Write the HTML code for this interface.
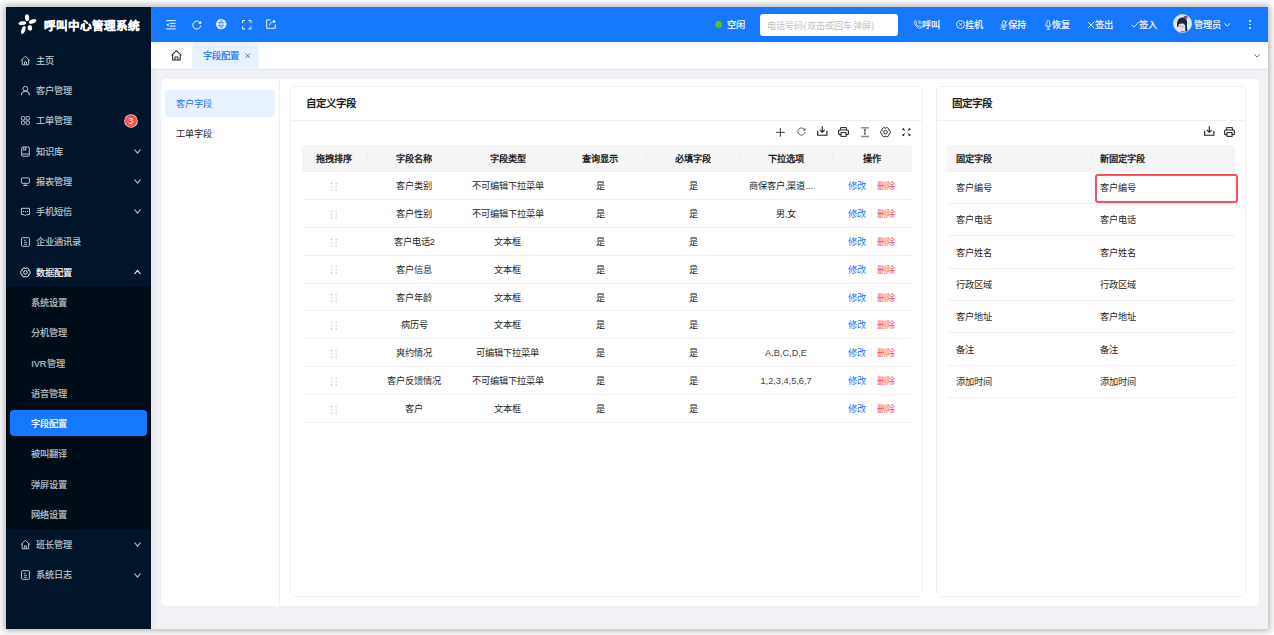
<!DOCTYPE html>
<html lang="zh-CN">
<head>
<meta charset="utf-8">
<style>
*{box-sizing:border-box;margin:0;padding:0}
html,body{width:1274px;height:635px;overflow:hidden;background:#fff}
body{font-family:"Liberation Sans",sans-serif;font-size:9.2px;color:#1f1f1f;position:relative}
#win{position:absolute;left:6px;top:7px;width:1262px;height:622px;background:#f0f2f5;box-shadow:0 0 7px 2px rgba(0,0,0,.3);overflow:hidden}
.a{position:absolute}
.t{white-space:nowrap;-webkit-text-stroke:0}
svg{display:block;overflow:visible}
</style>
</head>
<body>
<div id="win">
<div class="a" style="left:145.00px;top:35.00px;width:7.00px;height:587.00px;background:linear-gradient(90deg,rgba(29,35,41,.045),rgba(29,35,41,0))"></div>
<div class="a" style="left:0.00px;top:0.00px;width:145.00px;height:622.00px;background:#001529"></div>
<svg class="a" style="left:9.00px;top:5.00px;" width="24" height="24" viewBox="0 0 24 24"><ellipse cx="12.1" cy="5.7" rx="2.1" ry="3.4" transform="rotate(-5 12.1 5.7)" fill="#fff"/><ellipse cx="17.6" cy="9.4" rx="3.9" ry="2.0" transform="rotate(-22 17.6 9.4)" fill="#fff"/><ellipse cx="7.4" cy="11.2" rx="3.9" ry="1.9" transform="rotate(-8 7.4 11.2)" fill="#fff"/><ellipse cx="8.3" cy="18.0" rx="1.9" ry="4.2" transform="rotate(18 8.3 18)" fill="#fff"/><ellipse cx="14.9" cy="15.9" rx="2.2" ry="2.8" transform="rotate(-10 14.9 15.9)" fill="#fff"/></svg>
<div class="a t" style="left:38.00px;top:8.60px;height:20px;line-height:20px;font-size:11.6px;color:#fff;font-weight:700;-webkit-text-stroke:0;-webkit-text-stroke:.3px #fff;">呼叫中心管理系统</div>
<svg class="a" style="left:14.00px;top:47.80px;" width="11" height="11" viewBox="0 0 11 11"><path d="M0.9 5.7 L5.4 1.2 L9.9 5.7 M2.2 4.5 V9.8 H8.6 V4.5 M4.4 9.8 V6.9 H6.4 V9.8" fill="none" stroke="#bfc4cb" stroke-width="1" stroke-linejoin="round"/></svg>
<div class="a t" style="left:29.50px;top:43.90px;height:20px;line-height:20px;font-size:9.2px;color:#bfc4cb;font-weight:400;-webkit-text-stroke:.18px currentColor;">主页</div>
<svg class="a" style="left:14.00px;top:78.05px;" width="11" height="11" viewBox="0 0 11 11"><circle cx="5.4" cy="3.7" r="2.3" fill="none" stroke="#bfc4cb" stroke-width="1"/><path d="M1.4 10.2 C1.6 7.6 3.4 6.2 5.4 6.2 C7.4 6.2 9.2 7.6 9.4 10.2" fill="none" stroke="#bfc4cb" stroke-width="1.1"/></svg>
<div class="a t" style="left:29.50px;top:74.15px;height:20px;line-height:20px;font-size:9.2px;color:#bfc4cb;font-weight:400;-webkit-text-stroke:.18px currentColor;">客户管理</div>
<svg class="a" style="left:14.00px;top:108.30px;" width="11" height="11" viewBox="0 0 11 11"><rect x="1.4" y="1.6" width="3.4" height="3.4" rx=".9" fill="none" stroke="#bfc4cb" stroke-width="1"/><rect x="6" y="1.6" width="3.4" height="3.4" rx=".9" fill="none" stroke="#bfc4cb" stroke-width="1"/><rect x="1.4" y="6" width="3.4" height="3.4" rx=".9" fill="none" stroke="#bfc4cb" stroke-width="1"/><rect x="6" y="6" width="3.4" height="3.4" rx=".9" fill="none" stroke="#bfc4cb" stroke-width="1"/></svg>
<div class="a t" style="left:29.50px;top:104.40px;height:20px;line-height:20px;font-size:9.2px;color:#bfc4cb;font-weight:400;-webkit-text-stroke:.18px currentColor;">工单管理</div>
<svg class="a" style="left:14.00px;top:138.55px;" width="11" height="11" viewBox="0 0 11 11"><rect x="1.7" y="1" width="7.6" height="9.2" rx=".9" fill="none" stroke="#bfc4cb" stroke-width="1"/><path d="M3.7 1.2 V4.4 L4.7 3.6 L5.7 4.4 V1.2 M1.7 8 H9.3" fill="none" stroke="#bfc4cb" stroke-width="1"/></svg>
<div class="a t" style="left:29.50px;top:134.65px;height:20px;line-height:20px;font-size:9.2px;color:#bfc4cb;font-weight:400;-webkit-text-stroke:.18px currentColor;">知识库</div>
<svg class="a" style="left:127.50px;top:141.85px;" width="7" height="4.5" viewBox="0 0 7 4.5"><path d="M0.5 0.5 L3.5 4.0 L6.5 0.5" fill="none" stroke="#bfc4cb" stroke-width="1.15"/></svg>
<svg class="a" style="left:14.00px;top:168.80px;" width="11" height="11" viewBox="0 0 11 11"><rect x="1.4" y="1.9" width="8" height="5.4" rx=".7" fill="none" stroke="#bfc4cb" stroke-width="1"/><path d="M5.4 7.3 V9.3 M3.2 9.5 H7.6" fill="none" stroke="#bfc4cb" stroke-width="1"/></svg>
<div class="a t" style="left:29.50px;top:164.90px;height:20px;line-height:20px;font-size:9.2px;color:#bfc4cb;font-weight:400;-webkit-text-stroke:.18px currentColor;">报表管理</div>
<svg class="a" style="left:127.50px;top:172.10px;" width="7" height="4.5" viewBox="0 0 7 4.5"><path d="M0.5 0.5 L3.5 4.0 L6.5 0.5" fill="none" stroke="#bfc4cb" stroke-width="1.15"/></svg>
<svg class="a" style="left:14.00px;top:199.05px;" width="11" height="11" viewBox="0 0 11 11"><path d="M1.4 2.3 H9.5 V8.6 H6.5 L5.4 9.9 L4.3 8.6 H1.4 Z" fill="none" stroke="#bfc4cb" stroke-width="1" stroke-linejoin="round"/><circle cx="3.5" cy="5.5" r=".65" fill="#bfc4cb"/><circle cx="5.45" cy="5.5" r=".65" fill="#bfc4cb"/><circle cx="7.4" cy="5.5" r=".65" fill="#bfc4cb"/></svg>
<div class="a t" style="left:29.50px;top:195.15px;height:20px;line-height:20px;font-size:9.2px;color:#bfc4cb;font-weight:400;-webkit-text-stroke:.18px currentColor;">手机短信</div>
<svg class="a" style="left:127.50px;top:202.35px;" width="7" height="4.5" viewBox="0 0 7 4.5"><path d="M0.5 0.5 L3.5 4.0 L6.5 0.5" fill="none" stroke="#bfc4cb" stroke-width="1.15"/></svg>
<svg class="a" style="left:14.00px;top:229.30px;" width="11" height="11" viewBox="0 0 11 11"><rect x="1.5" y="1.7" width="7.9" height="8.6" rx=".9" fill="none" stroke="#bfc4cb" stroke-width="1"/><path d="M3.9 4.3 H5.8 M3.9 6.3 H7 M3.9 8.3 H7" fill="none" stroke="#bfc4cb" stroke-width=".9"/></svg>
<div class="a t" style="left:29.50px;top:225.40px;height:20px;line-height:20px;font-size:9.2px;color:#bfc4cb;font-weight:400;-webkit-text-stroke:.18px currentColor;">企业通讯录</div>
<svg class="a" style="left:14.00px;top:259.55px;" width="11" height="11" viewBox="0 0 11 11"><path d="M8.52 3.60 C10.70 2.81 10.70 7.99 8.52 7.20 C10.29 8.70 5.81 11.29 5.40 9.00 C4.99 11.29 0.51 8.70 2.28 7.20 C0.10 7.99 0.10 2.81 2.28 3.60 C0.51 2.10 4.99 -0.49 5.40 1.80 C5.81 -0.49 10.29 2.10 8.52 3.60 Z" fill="none" stroke="#fff" stroke-width=".95" stroke-linejoin="round"/><circle cx="5.4" cy="5.4" r="1.8" fill="none" stroke="#fff" stroke-width=".95"/></svg>
<div class="a t" style="left:29.50px;top:255.65px;height:20px;line-height:20px;font-size:9.2px;color:#fff;font-weight:400;-webkit-text-stroke:.18px currentColor;">数据配置</div>
<svg class="a" style="left:127.50px;top:262.85px;" width="7" height="4.5" viewBox="0 0 7 4.5"><path d="M0.5 4.0 L3.5 0.5 L6.5 4.0" fill="none" stroke="#fff" stroke-width="1.15"/></svg>
<div class="a" style="left:118.6px;top:107.6px;width:12.4px;height:12.4px;border-radius:50%;background:#ff4d4f;box-shadow:0 0 0 .8px rgba(255,255,255,.85);color:#fff;font-size:8.4px;line-height:12.4px;text-align:center">3</div>
<div class="a" style="left:0.00px;top:280.00px;width:145.00px;height:242.20px;background:#000c17"></div>
<div class="a t" style="left:25.20px;top:286.20px;height:20px;line-height:20px;font-size:9.2px;color:#bfc4cb;font-weight:400;-webkit-text-stroke:.18px currentColor;">系统设置</div>
<div class="a t" style="left:25.20px;top:316.45px;height:20px;line-height:20px;font-size:9.2px;color:#bfc4cb;font-weight:400;-webkit-text-stroke:.18px currentColor;">分机管理</div>
<div class="a t" style="left:25.20px;top:346.70px;height:20px;line-height:20px;font-size:9.2px;color:#bfc4cb;font-weight:400;-webkit-text-stroke:.18px currentColor;">IVR管理</div>
<div class="a t" style="left:25.20px;top:376.95px;height:20px;line-height:20px;font-size:9.2px;color:#bfc4cb;font-weight:400;-webkit-text-stroke:.18px currentColor;">语音管理</div>
<div class="a" style="left:4.00px;top:403.00px;width:137.00px;height:26.40px;background:#1677ff;border-radius:4px"></div>
<div class="a t" style="left:25.20px;top:407.20px;height:20px;line-height:20px;font-size:9.2px;color:#fff;font-weight:400;-webkit-text-stroke:.18px currentColor;">字段配置</div>
<div class="a t" style="left:25.20px;top:437.45px;height:20px;line-height:20px;font-size:9.2px;color:#bfc4cb;font-weight:400;-webkit-text-stroke:.18px currentColor;">被叫翻译</div>
<div class="a t" style="left:25.20px;top:467.70px;height:20px;line-height:20px;font-size:9.2px;color:#bfc4cb;font-weight:400;-webkit-text-stroke:.18px currentColor;">弹屏设置</div>
<div class="a t" style="left:25.20px;top:497.95px;height:20px;line-height:20px;font-size:9.2px;color:#bfc4cb;font-weight:400;-webkit-text-stroke:.18px currentColor;">网络设置</div>
<svg class="a" style="left:14.00px;top:532.10px;" width="11" height="11" viewBox="0 0 11 11"><path d="M0.9 5.7 L5.4 1.2 L9.9 5.7 M2.2 4.5 V9.8 H8.6 V4.5 M4.4 9.8 V6.9 H6.4 V9.8" fill="none" stroke="#bfc4cb" stroke-width="1" stroke-linejoin="round"/></svg>
<div class="a t" style="left:29.50px;top:528.20px;height:20px;line-height:20px;font-size:9.2px;color:#bfc4cb;font-weight:400;-webkit-text-stroke:.18px currentColor;">班长管理</div>
<svg class="a" style="left:127.50px;top:535.40px;" width="7" height="4.5" viewBox="0 0 7 4.5"><path d="M0.5 0.5 L3.5 4.0 L6.5 0.5" fill="none" stroke="#bfc4cb" stroke-width="1.15"/></svg>
<svg class="a" style="left:14.00px;top:562.35px;" width="11" height="11" viewBox="0 0 11 11"><rect x="1.5" y="1.7" width="7.9" height="8.6" rx=".9" fill="none" stroke="#bfc4cb" stroke-width="1"/><path d="M3.9 4.3 H5.8 M3.9 6.3 H7 M3.9 8.3 H7" fill="none" stroke="#bfc4cb" stroke-width=".9"/></svg>
<div class="a t" style="left:29.50px;top:558.45px;height:20px;line-height:20px;font-size:9.2px;color:#bfc4cb;font-weight:400;-webkit-text-stroke:.18px currentColor;">系统日志</div>
<svg class="a" style="left:127.50px;top:565.65px;" width="7" height="4.5" viewBox="0 0 7 4.5"><path d="M0.5 0.5 L3.5 4.0 L6.5 0.5" fill="none" stroke="#bfc4cb" stroke-width="1.15"/></svg>
<div class="a" style="left:145.00px;top:0.00px;width:1117.00px;height:35.00px;background:#1677ff"></div>
<svg class="a" style="left:160.00px;top:12.50px;" width="10" height="9.5" viewBox="0 0 10 9.5"><path d="M0.3 0.6 H9.7 M3.8 3.4 H9.7 M3.8 6.1 H9.7 M0.3 8.9 H9.7" stroke="#fff" stroke-width=".95" fill="none"/><path d="M0.4 4.75 L2.6 3.3 V6.2 Z" fill="#fff"/></svg>
<svg class="a" style="left:185.50px;top:12.50px;" width="9.5" height="9.5" viewBox="0 0 10 10"><path d="M8.7 3.3 A4.2 4.2 0 1 0 9.2 5.8" stroke="#fff" stroke-width="1" fill="none"/><path d="M9.7 0.7 V4 H6.4 Z" fill="#fff"/></svg>
<svg class="a" style="left:210.00px;top:12.20px;" width="10.4" height="10.4" viewBox="0 0 10 10"><circle cx="5" cy="5" r="4.6" fill="#fff"/><path d="M0.6 3.5 H9.4 M0.6 6.5 H9.4 M5 0.5 V9.5" stroke="#1677ff" stroke-width=".6" fill="none"/><path d="M4.9 0.6 C2.6 2.5 2.6 7.5 4.9 9.4 M5.1 0.6 C7.4 2.5 7.4 7.5 5.1 9.4" stroke="#1677ff" stroke-width=".6" fill="none"/><circle cx="5" cy="5" r="4.6" fill="none" stroke="#fff" stroke-width=".8"/></svg>
<svg class="a" style="left:235.80px;top:12.60px;" width="9.5" height="9.5" viewBox="0 0 10 10"><path d="M0.6 3.3 V0.6 H3.3 M6.7 0.6 H9.4 V3.3 M9.4 6.7 V9.4 H6.7 M3.3 9.4 H0.6 V6.7" stroke="#fff" stroke-width="1" fill="none"/></svg>
<svg class="a" style="left:260.00px;top:12.30px;" width="10" height="10" viewBox="0 0 10 10"><path d="M4.6 0.9 H0.7 V9.3 H9.2 V5.4" stroke="#fff" stroke-width=".95" fill="none"/><path d="M3.4 6.6 C4.2 3.8 5.8 2.7 8.4 2.5" stroke="#fff" stroke-width=".95" fill="none"/><path d="M7.2 0.5 L9.9 2.3 L7.6 4.5 Z" fill="#fff"/></svg>
<div class="a" style="left:708.5px;top:14px;width:7px;height:7px;border-radius:50%;background:#52c41a"></div>
<div class="a t" style="left:720.60px;top:8.10px;height:20px;line-height:20px;font-size:9.2px;color:#fff;font-weight:400;-webkit-text-stroke:.18px currentColor;">空闲</div>
<div class="a" style="left:754.00px;top:7.40px;width:137.80px;height:21.20px;background:#fff;border-radius:3px"></div>
<div class="a t" style="left:760.60px;top:8.60px;height:20px;line-height:20px;font-size:9.2px;color:#bfbfbf;font-weight:400;letter-spacing:.2px;">电话号码(双击或回车弹屏)</div>
<svg class="a" style="left:906.60px;top:12.80px;" width="9" height="9" viewBox="0 0 9 9"><path d="M1.4 1.3 L2.8 0.7 L4 2.9 L3 3.8 C3.6 5.1 4.3 5.8 5.5 6.4 L6.4 5.4 L8.5 6.6 L7.9 8.1 C4.6 8.7 0.8 4.7 1.4 1.3 Z" fill="none" stroke="#fff" stroke-width=".75" stroke-linejoin="round"/><path d="M5.3 0.7 A3.2 3.2 0 0 1 8.4 3.8 M5.2 2.2 A1.7 1.7 0 0 1 6.9 3.9" fill="none" stroke="#fff" stroke-width=".7"/></svg>
<div class="a t" style="left:916.30px;top:8.10px;height:20px;line-height:20px;font-size:9.2px;color:#fff;font-weight:400;-webkit-text-stroke:.18px currentColor;">呼叫</div>
<svg class="a" style="left:950.00px;top:12.80px;" width="9" height="9" viewBox="0 0 9 9"><circle cx="4.5" cy="4.5" r="4" fill="none" stroke="#fff" stroke-width=".75"/><path d="M3.2 3.2 L5.8 5.8 M5.8 3.2 L3.2 5.8" stroke="#fff" stroke-width=".75"/></svg>
<div class="a t" style="left:959.20px;top:8.10px;height:20px;line-height:20px;font-size:9.2px;color:#fff;font-weight:400;-webkit-text-stroke:.18px currentColor;">挂机</div>
<svg class="a" style="left:994.00px;top:12.60px;" width="8" height="10" viewBox="0 0 8 10"><rect x="2.6" y="0.6" width="3" height="5.6" rx="1.5" fill="none" stroke="#fff" stroke-width=".75"/><path d="M1.1 4.6 C1.1 8.2 7 8.2 7 4.6 M4.1 7.3 V9.4 M2.4 9.4 H5.8 M0.4 9.2 L7.4 0.6" fill="none" stroke="#fff" stroke-width=".75"/></svg>
<div class="a t" style="left:1002.40px;top:8.10px;height:20px;line-height:20px;font-size:9.2px;color:#fff;font-weight:400;-webkit-text-stroke:.18px currentColor;">保持</div>
<svg class="a" style="left:1038.80px;top:12.50px;" width="6.5" height="10" viewBox="0 0 6.5 10"><rect x="1.8" y="0.6" width="2.9" height="5.8" rx="1.45" fill="none" stroke="#fff" stroke-width=".75"/><path d="M0.5 4.6 C0.5 8.3 6 8.3 6 4.6 M3.25 7.4 V9.4 M1.3 9.4 H5.2" fill="none" stroke="#fff" stroke-width=".75"/></svg>
<div class="a t" style="left:1046.00px;top:8.10px;height:20px;line-height:20px;font-size:9.2px;color:#fff;font-weight:400;-webkit-text-stroke:.18px currentColor;">恢复</div>
<svg class="a" style="left:1081.40px;top:13.50px;" width="8" height="8" viewBox="0 0 8 8"><path d="M0.8 0.8 L7.2 7.2 M7.2 0.8 L0.8 7.2" stroke="#fff" stroke-width=".9"/></svg>
<div class="a t" style="left:1089.20px;top:8.10px;height:20px;line-height:20px;font-size:9.2px;color:#fff;font-weight:400;-webkit-text-stroke:.18px currentColor;">签出</div>
<svg class="a" style="left:1124.90px;top:13.80px;" width="8.5" height="7" viewBox="0 0 8.5 7"><path d="M0.5 3.6 L3 6.2 L8 0.6" fill="none" stroke="#fff" stroke-width=".9"/></svg>
<div class="a t" style="left:1133.00px;top:8.10px;height:20px;line-height:20px;font-size:9.2px;color:#fff;font-weight:400;-webkit-text-stroke:.18px currentColor;">签入</div>
<svg class="a" style="left:1167.00px;top:7.20px;" width="19" height="19" viewBox="0 0 19 19"><defs><clipPath id="av"><circle cx="9.5" cy="9.5" r="9.3"/></clipPath></defs><g clip-path="url(#av)"><rect width="19" height="19" fill="#dfe8f4"/><path d="M4.2 13 C3.4 7 5.2 3.6 9.6 3.4 C13.4 3.3 14.6 6.6 14 10.5 C13.8 13 14 15.5 15.5 19 L12.6 19 C12.2 16 12 13.5 12.2 11 Z" fill="#1d2745"/><ellipse cx="8.6" cy="12" rx="3.1" ry="3.7" fill="#f1d8d8"/><path d="M5 10.8 C5.3 7.4 8.6 6.4 12.4 8.4 C12.6 9.4 12.4 10.3 12.2 10.9 C10.8 9.3 8 9 5 10.8 Z" fill="#1d2745"/><path d="M6.3 19 C7 16.6 11.6 16.2 13.4 19 Z" fill="#2f8be0"/><ellipse cx="12.6" cy="3.2" rx="2.1" ry="1.5" fill="#8e4d5c"/><circle cx="7.5" cy="12.2" r=".45" fill="#2a2a3a"/><circle cx="9.9" cy="12.2" r=".45" fill="#2a2a3a"/><ellipse cx="8.8" cy="14.4" rx=".6" ry=".3" fill="#d88"/></g><circle cx="9.5" cy="9.5" r="9.1" fill="none" stroke="#cfdcee" stroke-width=".6"/></svg>
<div class="a t" style="left:1188.00px;top:8.10px;height:20px;line-height:20px;font-size:9.2px;color:#fff;font-weight:400;-webkit-text-stroke:.18px currentColor;">管理员</div>
<svg class="a" style="left:1218.40px;top:16.10px;" width="6.6" height="3.6" viewBox="0 0 6.6 3.6"><path d="M0.5 0.5 L3.3 3.1 L6.1 0.5" fill="none" stroke="#fff" stroke-width="1"/></svg>
<div class="a" style="left:1242.75px;top:13.25px;width:1.9px;height:1.9px;border-radius:50%;background:#fff"></div>
<div class="a" style="left:1242.75px;top:16.5px;width:1.9px;height:1.9px;border-radius:50%;background:#fff"></div>
<div class="a" style="left:1242.75px;top:19.75px;width:1.9px;height:1.9px;border-radius:50%;background:#fff"></div>
<div class="a" style="left:145.00px;top:35.00px;width:1117.00px;height:27.00px;background:#fff"></div>
<div class="a" style="left:145.00px;top:61.40px;width:1117.00px;height:1.20px;background:linear-gradient(rgba(0,0,0,.02),rgba(0,0,0,.05))"></div>
<div class="a" style="left:145.00px;top:35.00px;width:1117.00px;height:3.00px;background:linear-gradient(rgba(0,0,0,.05),rgba(0,0,0,0))"></div>
<svg class="a" style="left:164.80px;top:43.40px;" width="11" height="10.5" viewBox="0 0 11 10.5"><path d="M0.6 5.3 L5.45 0.7 L10.3 5.3 M1.7 4.3 V9.9 H9.2 V4.3 M4 9.9 V6.9 H6.9 V9.9" fill="none" stroke="#262626" stroke-width="1.05" stroke-linejoin="round"/></svg>
<svg class="a" style="left:182px;top:35.4px" width="75" height="26.6" viewBox="0 0 75 26.6"><path d="M0 26.6 C3 26.6 4.2 25 4.2 21.5 V5 C4.2 2 5.5 0 8.5 0 H66.5 C69.5 0 70.8 2 70.8 5 V21.5 C70.8 25 72 26.6 75 26.6 Z" fill="#e7f1ff"/></svg>
<div class="a t" style="left:197.00px;top:38.90px;height:20px;line-height:20px;font-size:9.2px;color:#1677ff;font-weight:400;-webkit-text-stroke:.2px #1677ff;">字段配置</div>
<svg class="a" style="left:238.80px;top:45.60px;" width="5.5" height="5.5" viewBox="0 0 5.5 5.5"><path d="M0.4 0.4 L5.1 5.1 M5.1 0.4 L0.4 5.1" stroke="#555" stroke-width=".8"/></svg>
<svg class="a" style="left:1247.90px;top:47.00px;" width="6.3" height="3.6" viewBox="0 0 6.3 3.6"><path d="M0.5 0.5 L3.15 3.1 L5.8 0.5" fill="none" stroke="#666" stroke-width="1"/></svg>
<div class="a" style="left:155.00px;top:72.00px;width:1098.00px;height:527.00px;background:#fff;border-radius:5px"></div>
<div class="a" style="left:273.00px;top:72.00px;width:1.00px;height:527.00px;background:#f0f0f0"></div>
<div class="a" style="left:159.00px;top:83.10px;width:109.70px;height:26.50px;background:#e7f1ff;border-radius:4px"></div>
<div class="a t" style="left:170.00px;top:86.90px;height:20px;line-height:20px;font-size:9.2px;color:#1677ff;font-weight:400;">客户字段</div>
<div class="a t" style="left:170.00px;top:117.40px;height:20px;line-height:20px;font-size:9.2px;color:#1f1f1f;font-weight:400;">工单字段</div>
<div class="a" style="left:287.00px;top:79.00px;width:627.00px;height:1.00px;background:#f0f0f0"></div>
<div class="a" style="left:284.00px;top:81.80px;width:1.00px;height:505.40px;background:#f0f0f0"></div>
<div class="a" style="left:916.00px;top:81.80px;width:1.00px;height:505.40px;background:#f0f0f0"></div>
<div class="a" style="left:287.00px;top:589.00px;width:627.00px;height:1.00px;background:#f0f0f0"></div>
<div class="a" style="left:284.30px;top:113.30px;width:632.70px;height:1.00px;background:#f0f0f0"></div>
<div class="a t" style="left:300.40px;top:86.00px;height:20px;line-height:20px;font-size:10.5px;color:#1f1f1f;font-weight:700;-webkit-text-stroke:0;">自定义字段</div>
<svg class="a" style="left:769.90px;top:120.50px;" width="8.7" height="8.7" viewBox="0 0 9 9"><path d="M4.5 0 V9 M0 4.5 H9" stroke="#1f1f1f" stroke-width=".9"/></svg>
<svg class="a" style="left:791.00px;top:120.40px;" width="8.8" height="8.8" viewBox="0 0 10 10"><path d="M8.6 3.2 A4.1 4.1 0 1 0 9.1 5.6" stroke="#555" stroke-width="1" fill="none"/><path d="M9.6 0.8 V3.9 H6.5 Z" fill="#555"/></svg>
<svg class="a" style="left:810.90px;top:119.30px;" width="10.6" height="10" viewBox="0 0 10.6 10"><path d="M5.3 0.3 V6.2 M2.9 3.9 L5.3 6.3 L7.7 3.9 M0.7 4.8 V9.3 H9.9 V4.8" stroke="#1f1f1f" stroke-width="1.1" fill="none"/></svg>
<svg class="a" style="left:832.00px;top:119.60px;" width="11" height="10" viewBox="0 0 11 10"><path d="M2.6 3 V0.6 H8.4 V3" stroke="#1f1f1f" stroke-width="1" fill="none"/><rect x="0.6" y="3" width="9.8" height="4.6" rx="1" stroke="#1f1f1f" stroke-width="1.1" fill="none"/><rect x="3" y="5.6" width="5" height="3.8" stroke="#1f1f1f" stroke-width="1" fill="#fff"/></svg>
<svg class="a" style="left:854.50px;top:119.50px;" width="8" height="10.4" viewBox="0 0 8 10.4"><path d="M0.2 0.9 H7.9" stroke="#1f1f1f" stroke-width=".8"/><rect x="0.2" y="8.7" width="7.7" height="1.6" fill="#888"/><path d="M3.95 2.2 V7.4" stroke="#1f1f1f" stroke-width=".8"/><path d="M2.9 3.4 L3.95 2 L5 3.4 Z M2.9 6.4 L3.95 7.8 L5 6.4 Z" fill="#1f1f1f"/></svg>
<svg class="a" style="left:873.80px;top:119.60px;" width="11" height="10.4" viewBox="0 0 11 10.4"><path d="M8.70 3.35 C10.89 2.57 10.89 7.83 8.70 7.05 C10.47 8.56 5.92 11.19 5.50 8.90 C5.08 11.19 0.53 8.56 2.30 7.05 C0.11 7.83 0.11 2.57 2.30 3.35 C0.53 1.84 5.08 -0.79 5.50 1.50 C5.92 -0.79 10.47 1.84 8.70 3.35 Z" stroke="#1f1f1f" stroke-width=".9" fill="none" stroke-linejoin="round"/><circle cx="5.5" cy="5.2" r="1.8" stroke="#1f1f1f" stroke-width=".9" fill="none"/></svg>
<svg class="a" style="left:896.20px;top:120.80px;" width="8.8" height="8.2" viewBox="0 0 8.8 8.2"><path d="M1.2 1.2 L3.2 3.0 M7.6 1.2 L5.6 3.0 M1.2 7 L3.2 5.2 M7.6 7 L5.6 5.2" stroke="#1f1f1f" stroke-width=".8"/><circle cx="1.3" cy="1.2" r="1.05" fill="#1f1f1f"/><circle cx="7.5" cy="1.2" r="1.05" fill="#1f1f1f"/><circle cx="1.3" cy="7" r="1.05" fill="#1f1f1f"/><circle cx="7.5" cy="7" r="1.05" fill="#1f1f1f"/></svg>
<div class="a" style="left:295.70px;top:138.00px;width:610.30px;height:26.00px;background:#f5f5f5;border-radius:4px 4px 0 0"></div>
<div class="a" style="left:295.70px;top:164.00px;width:610.30px;height:1.00px;background:#f0f0f0"></div>
<div class="a t" style="left:178.35px;width:300px;text-align:center;top:141.80px;height:20px;line-height:20px;font-size:9.2px;color:#1f1f1f;font-weight:700;-webkit-text-stroke:0;">拖拽排序</div>
<div class="a t" style="left:258.25px;width:300px;text-align:center;top:141.80px;height:20px;line-height:20px;font-size:9.2px;color:#1f1f1f;font-weight:700;-webkit-text-stroke:0;">字段名称</div>
<div class="a" style="left:360.50px;top:144.50px;width:1.00px;height:13.00px;background:#f0f0f0"></div>
<div class="a t" style="left:351.75px;width:300px;text-align:center;top:141.80px;height:20px;line-height:20px;font-size:9.2px;color:#1f1f1f;font-weight:700;-webkit-text-stroke:0;">字段类型</div>
<div class="a" style="left:455.00px;top:144.50px;width:1.00px;height:13.00px;background:#f0f0f0"></div>
<div class="a t" style="left:444.30px;width:300px;text-align:center;top:141.80px;height:20px;line-height:20px;font-size:9.2px;color:#1f1f1f;font-weight:700;-webkit-text-stroke:0;">查询显示</div>
<div class="a" style="left:547.50px;top:144.50px;width:1.00px;height:13.00px;background:#f0f0f0"></div>
<div class="a t" style="left:537.05px;width:300px;text-align:center;top:141.80px;height:20px;line-height:20px;font-size:9.2px;color:#1f1f1f;font-weight:700;-webkit-text-stroke:0;">必填字段</div>
<div class="a" style="left:640.10px;top:144.50px;width:1.00px;height:13.00px;background:#f0f0f0"></div>
<div class="a t" style="left:630.05px;width:300px;text-align:center;top:141.80px;height:20px;line-height:20px;font-size:9.2px;color:#1f1f1f;font-weight:700;-webkit-text-stroke:0;">下拉选项</div>
<div class="a" style="left:733.00px;top:144.50px;width:1.00px;height:13.00px;background:#f0f0f0"></div>
<div class="a t" style="left:716.30px;width:300px;text-align:center;top:141.80px;height:20px;line-height:20px;font-size:9.2px;color:#1f1f1f;font-weight:700;-webkit-text-stroke:0;">操作</div>
<div class="a" style="left:826.10px;top:144.50px;width:1.00px;height:13.00px;background:#f0f0f0"></div>
<div class="a" style="left:295.70px;top:192.00px;width:610.30px;height:1.00px;background:#f0f0f0"></div>
<svg class="a" style="left:324.90px;top:175.88px;" width="6" height="7.2" viewBox="0 0 6 7.2"><circle cx="0.6" cy="0.6" r=".6" fill="#aaa"/><circle cx="0.6" cy="3.75" r=".6" fill="#aaa"/><circle cx="0.6" cy="6.8999999999999995" r=".6" fill="#aaa"/><circle cx="5.1" cy="0.6" r=".6" fill="#aaa"/><circle cx="5.1" cy="3.75" r=".6" fill="#aaa"/><circle cx="5.1" cy="6.8999999999999995" r=".6" fill="#aaa"/></svg>
<div class="a t" style="left:258.25px;width:300px;text-align:center;top:169.18px;height:20px;line-height:20px;font-size:9.2px;color:#262626;font-weight:400;">客户类别</div>
<div class="a t" style="left:351.75px;width:300px;text-align:center;top:169.18px;height:20px;line-height:20px;font-size:9.2px;color:#262626;font-weight:400;">不可编辑下拉菜单</div>
<div class="a t" style="left:444.30px;width:300px;text-align:center;top:169.18px;height:20px;line-height:20px;font-size:9.2px;color:#262626;font-weight:400;">是</div>
<div class="a t" style="left:537.05px;width:300px;text-align:center;top:169.18px;height:20px;line-height:20px;font-size:9.2px;color:#262626;font-weight:400;">是</div>
<div class="a t" style="left:625.05px;width:300px;text-align:center;top:169.18px;height:20px;line-height:20px;font-size:9.2px;color:#262626;font-weight:400;">商保客户,渠道...</div>
<div class="a t" style="left:841.90px;top:169.18px;height:20px;line-height:20px;font-size:9.2px;color:#1677ff;font-weight:400;">修改</div>
<div class="a" style="left:865.40px;top:174.08px;width:0.90px;height:9.00px;background:#f0f0f0"></div>
<div class="a t" style="left:870.90px;top:169.18px;height:20px;line-height:20px;font-size:9.2px;color:#ff4d4f;font-weight:400;">删除</div>
<div class="a" style="left:295.70px;top:219.85px;width:610.30px;height:1.00px;background:#f0f0f0"></div>
<svg class="a" style="left:324.90px;top:203.73px;" width="6" height="7.2" viewBox="0 0 6 7.2"><circle cx="0.6" cy="0.6" r=".6" fill="#aaa"/><circle cx="0.6" cy="3.75" r=".6" fill="#aaa"/><circle cx="0.6" cy="6.8999999999999995" r=".6" fill="#aaa"/><circle cx="5.1" cy="0.6" r=".6" fill="#aaa"/><circle cx="5.1" cy="3.75" r=".6" fill="#aaa"/><circle cx="5.1" cy="6.8999999999999995" r=".6" fill="#aaa"/></svg>
<div class="a t" style="left:258.25px;width:300px;text-align:center;top:197.03px;height:20px;line-height:20px;font-size:9.2px;color:#262626;font-weight:400;">客户性别</div>
<div class="a t" style="left:351.75px;width:300px;text-align:center;top:197.03px;height:20px;line-height:20px;font-size:9.2px;color:#262626;font-weight:400;">不可编辑下拉菜单</div>
<div class="a t" style="left:444.30px;width:300px;text-align:center;top:197.03px;height:20px;line-height:20px;font-size:9.2px;color:#262626;font-weight:400;">是</div>
<div class="a t" style="left:537.05px;width:300px;text-align:center;top:197.03px;height:20px;line-height:20px;font-size:9.2px;color:#262626;font-weight:400;">是</div>
<div class="a t" style="left:630.05px;width:300px;text-align:center;top:197.03px;height:20px;line-height:20px;font-size:9.2px;color:#262626;font-weight:400;">男,女</div>
<div class="a t" style="left:841.90px;top:197.03px;height:20px;line-height:20px;font-size:9.2px;color:#1677ff;font-weight:400;">修改</div>
<div class="a" style="left:865.40px;top:201.93px;width:0.90px;height:9.00px;background:#f0f0f0"></div>
<div class="a t" style="left:870.90px;top:197.03px;height:20px;line-height:20px;font-size:9.2px;color:#ff4d4f;font-weight:400;">删除</div>
<div class="a" style="left:295.70px;top:247.70px;width:610.30px;height:1.00px;background:#f0f0f0"></div>
<svg class="a" style="left:324.90px;top:231.58px;" width="6" height="7.2" viewBox="0 0 6 7.2"><circle cx="0.6" cy="0.6" r=".6" fill="#aaa"/><circle cx="0.6" cy="3.75" r=".6" fill="#aaa"/><circle cx="0.6" cy="6.8999999999999995" r=".6" fill="#aaa"/><circle cx="5.1" cy="0.6" r=".6" fill="#aaa"/><circle cx="5.1" cy="3.75" r=".6" fill="#aaa"/><circle cx="5.1" cy="6.8999999999999995" r=".6" fill="#aaa"/></svg>
<div class="a t" style="left:258.25px;width:300px;text-align:center;top:224.88px;height:20px;line-height:20px;font-size:9.2px;color:#262626;font-weight:400;">客户电话2</div>
<div class="a t" style="left:351.75px;width:300px;text-align:center;top:224.88px;height:20px;line-height:20px;font-size:9.2px;color:#262626;font-weight:400;">文本框</div>
<div class="a t" style="left:444.30px;width:300px;text-align:center;top:224.88px;height:20px;line-height:20px;font-size:9.2px;color:#262626;font-weight:400;">是</div>
<div class="a t" style="left:537.05px;width:300px;text-align:center;top:224.88px;height:20px;line-height:20px;font-size:9.2px;color:#262626;font-weight:400;">是</div>
<div class="a t" style="left:841.90px;top:224.88px;height:20px;line-height:20px;font-size:9.2px;color:#1677ff;font-weight:400;">修改</div>
<div class="a" style="left:865.40px;top:229.78px;width:0.90px;height:9.00px;background:#f0f0f0"></div>
<div class="a t" style="left:870.90px;top:224.88px;height:20px;line-height:20px;font-size:9.2px;color:#ff4d4f;font-weight:400;">删除</div>
<div class="a" style="left:295.70px;top:275.55px;width:610.30px;height:1.00px;background:#f0f0f0"></div>
<svg class="a" style="left:324.90px;top:259.43px;" width="6" height="7.2" viewBox="0 0 6 7.2"><circle cx="0.6" cy="0.6" r=".6" fill="#aaa"/><circle cx="0.6" cy="3.75" r=".6" fill="#aaa"/><circle cx="0.6" cy="6.8999999999999995" r=".6" fill="#aaa"/><circle cx="5.1" cy="0.6" r=".6" fill="#aaa"/><circle cx="5.1" cy="3.75" r=".6" fill="#aaa"/><circle cx="5.1" cy="6.8999999999999995" r=".6" fill="#aaa"/></svg>
<div class="a t" style="left:258.25px;width:300px;text-align:center;top:252.72px;height:20px;line-height:20px;font-size:9.2px;color:#262626;font-weight:400;">客户信息</div>
<div class="a t" style="left:351.75px;width:300px;text-align:center;top:252.72px;height:20px;line-height:20px;font-size:9.2px;color:#262626;font-weight:400;">文本框</div>
<div class="a t" style="left:444.30px;width:300px;text-align:center;top:252.72px;height:20px;line-height:20px;font-size:9.2px;color:#262626;font-weight:400;">是</div>
<div class="a t" style="left:537.05px;width:300px;text-align:center;top:252.72px;height:20px;line-height:20px;font-size:9.2px;color:#262626;font-weight:400;">是</div>
<div class="a t" style="left:841.90px;top:252.72px;height:20px;line-height:20px;font-size:9.2px;color:#1677ff;font-weight:400;">修改</div>
<div class="a" style="left:865.40px;top:257.62px;width:0.90px;height:9.00px;background:#f0f0f0"></div>
<div class="a t" style="left:870.90px;top:252.72px;height:20px;line-height:20px;font-size:9.2px;color:#ff4d4f;font-weight:400;">删除</div>
<div class="a" style="left:295.70px;top:303.40px;width:610.30px;height:1.00px;background:#f0f0f0"></div>
<svg class="a" style="left:324.90px;top:287.28px;" width="6" height="7.2" viewBox="0 0 6 7.2"><circle cx="0.6" cy="0.6" r=".6" fill="#aaa"/><circle cx="0.6" cy="3.75" r=".6" fill="#aaa"/><circle cx="0.6" cy="6.8999999999999995" r=".6" fill="#aaa"/><circle cx="5.1" cy="0.6" r=".6" fill="#aaa"/><circle cx="5.1" cy="3.75" r=".6" fill="#aaa"/><circle cx="5.1" cy="6.8999999999999995" r=".6" fill="#aaa"/></svg>
<div class="a t" style="left:258.25px;width:300px;text-align:center;top:280.58px;height:20px;line-height:20px;font-size:9.2px;color:#262626;font-weight:400;">客户年龄</div>
<div class="a t" style="left:351.75px;width:300px;text-align:center;top:280.58px;height:20px;line-height:20px;font-size:9.2px;color:#262626;font-weight:400;">文本框</div>
<div class="a t" style="left:444.30px;width:300px;text-align:center;top:280.58px;height:20px;line-height:20px;font-size:9.2px;color:#262626;font-weight:400;">是</div>
<div class="a t" style="left:537.05px;width:300px;text-align:center;top:280.58px;height:20px;line-height:20px;font-size:9.2px;color:#262626;font-weight:400;">是</div>
<div class="a t" style="left:841.90px;top:280.58px;height:20px;line-height:20px;font-size:9.2px;color:#1677ff;font-weight:400;">修改</div>
<div class="a" style="left:865.40px;top:285.48px;width:0.90px;height:9.00px;background:#f0f0f0"></div>
<div class="a t" style="left:870.90px;top:280.58px;height:20px;line-height:20px;font-size:9.2px;color:#ff4d4f;font-weight:400;">删除</div>
<div class="a" style="left:295.70px;top:331.25px;width:610.30px;height:1.00px;background:#f0f0f0"></div>
<svg class="a" style="left:324.90px;top:315.12px;" width="6" height="7.2" viewBox="0 0 6 7.2"><circle cx="0.6" cy="0.6" r=".6" fill="#aaa"/><circle cx="0.6" cy="3.75" r=".6" fill="#aaa"/><circle cx="0.6" cy="6.8999999999999995" r=".6" fill="#aaa"/><circle cx="5.1" cy="0.6" r=".6" fill="#aaa"/><circle cx="5.1" cy="3.75" r=".6" fill="#aaa"/><circle cx="5.1" cy="6.8999999999999995" r=".6" fill="#aaa"/></svg>
<div class="a t" style="left:258.25px;width:300px;text-align:center;top:308.43px;height:20px;line-height:20px;font-size:9.2px;color:#262626;font-weight:400;">病历号</div>
<div class="a t" style="left:351.75px;width:300px;text-align:center;top:308.43px;height:20px;line-height:20px;font-size:9.2px;color:#262626;font-weight:400;">文本框</div>
<div class="a t" style="left:444.30px;width:300px;text-align:center;top:308.43px;height:20px;line-height:20px;font-size:9.2px;color:#262626;font-weight:400;">是</div>
<div class="a t" style="left:537.05px;width:300px;text-align:center;top:308.43px;height:20px;line-height:20px;font-size:9.2px;color:#262626;font-weight:400;">是</div>
<div class="a t" style="left:841.90px;top:308.43px;height:20px;line-height:20px;font-size:9.2px;color:#1677ff;font-weight:400;">修改</div>
<div class="a" style="left:865.40px;top:313.32px;width:0.90px;height:9.00px;background:#f0f0f0"></div>
<div class="a t" style="left:870.90px;top:308.43px;height:20px;line-height:20px;font-size:9.2px;color:#ff4d4f;font-weight:400;">删除</div>
<div class="a" style="left:295.70px;top:359.10px;width:610.30px;height:1.00px;background:#f0f0f0"></div>
<svg class="a" style="left:324.90px;top:342.98px;" width="6" height="7.2" viewBox="0 0 6 7.2"><circle cx="0.6" cy="0.6" r=".6" fill="#aaa"/><circle cx="0.6" cy="3.75" r=".6" fill="#aaa"/><circle cx="0.6" cy="6.8999999999999995" r=".6" fill="#aaa"/><circle cx="5.1" cy="0.6" r=".6" fill="#aaa"/><circle cx="5.1" cy="3.75" r=".6" fill="#aaa"/><circle cx="5.1" cy="6.8999999999999995" r=".6" fill="#aaa"/></svg>
<div class="a t" style="left:258.25px;width:300px;text-align:center;top:336.28px;height:20px;line-height:20px;font-size:9.2px;color:#262626;font-weight:400;">爽约情况</div>
<div class="a t" style="left:351.75px;width:300px;text-align:center;top:336.28px;height:20px;line-height:20px;font-size:9.2px;color:#262626;font-weight:400;">可编辑下拉菜单</div>
<div class="a t" style="left:444.30px;width:300px;text-align:center;top:336.28px;height:20px;line-height:20px;font-size:9.2px;color:#262626;font-weight:400;">是</div>
<div class="a t" style="left:537.05px;width:300px;text-align:center;top:336.28px;height:20px;line-height:20px;font-size:9.2px;color:#262626;font-weight:400;">是</div>
<div class="a t" style="left:630.05px;width:300px;text-align:center;top:336.28px;height:20px;line-height:20px;font-size:9.2px;color:#444;font-weight:400;">A,B,C,D,E</div>
<div class="a t" style="left:841.90px;top:336.28px;height:20px;line-height:20px;font-size:9.2px;color:#1677ff;font-weight:400;">修改</div>
<div class="a" style="left:865.40px;top:341.18px;width:0.90px;height:9.00px;background:#f0f0f0"></div>
<div class="a t" style="left:870.90px;top:336.28px;height:20px;line-height:20px;font-size:9.2px;color:#ff4d4f;font-weight:400;">删除</div>
<div class="a" style="left:295.70px;top:386.95px;width:610.30px;height:1.00px;background:#f0f0f0"></div>
<svg class="a" style="left:324.90px;top:370.83px;" width="6" height="7.2" viewBox="0 0 6 7.2"><circle cx="0.6" cy="0.6" r=".6" fill="#aaa"/><circle cx="0.6" cy="3.75" r=".6" fill="#aaa"/><circle cx="0.6" cy="6.8999999999999995" r=".6" fill="#aaa"/><circle cx="5.1" cy="0.6" r=".6" fill="#aaa"/><circle cx="5.1" cy="3.75" r=".6" fill="#aaa"/><circle cx="5.1" cy="6.8999999999999995" r=".6" fill="#aaa"/></svg>
<div class="a t" style="left:258.25px;width:300px;text-align:center;top:364.13px;height:20px;line-height:20px;font-size:9.2px;color:#262626;font-weight:400;">客户反馈情况</div>
<div class="a t" style="left:351.75px;width:300px;text-align:center;top:364.13px;height:20px;line-height:20px;font-size:9.2px;color:#262626;font-weight:400;">不可编辑下拉菜单</div>
<div class="a t" style="left:444.30px;width:300px;text-align:center;top:364.13px;height:20px;line-height:20px;font-size:9.2px;color:#262626;font-weight:400;">是</div>
<div class="a t" style="left:537.05px;width:300px;text-align:center;top:364.13px;height:20px;line-height:20px;font-size:9.2px;color:#262626;font-weight:400;">是</div>
<div class="a t" style="left:630.05px;width:300px;text-align:center;top:364.13px;height:20px;line-height:20px;font-size:9.2px;color:#444;font-weight:400;">1,2,3,4,5,6,7</div>
<div class="a t" style="left:841.90px;top:364.13px;height:20px;line-height:20px;font-size:9.2px;color:#1677ff;font-weight:400;">修改</div>
<div class="a" style="left:865.40px;top:369.03px;width:0.90px;height:9.00px;background:#f0f0f0"></div>
<div class="a t" style="left:870.90px;top:364.13px;height:20px;line-height:20px;font-size:9.2px;color:#ff4d4f;font-weight:400;">删除</div>
<div class="a" style="left:295.70px;top:414.80px;width:610.30px;height:1.00px;background:#f0f0f0"></div>
<svg class="a" style="left:324.90px;top:398.68px;" width="6" height="7.2" viewBox="0 0 6 7.2"><circle cx="0.6" cy="0.6" r=".6" fill="#aaa"/><circle cx="0.6" cy="3.75" r=".6" fill="#aaa"/><circle cx="0.6" cy="6.8999999999999995" r=".6" fill="#aaa"/><circle cx="5.1" cy="0.6" r=".6" fill="#aaa"/><circle cx="5.1" cy="3.75" r=".6" fill="#aaa"/><circle cx="5.1" cy="6.8999999999999995" r=".6" fill="#aaa"/></svg>
<div class="a t" style="left:258.25px;width:300px;text-align:center;top:391.98px;height:20px;line-height:20px;font-size:9.2px;color:#262626;font-weight:400;">客户</div>
<div class="a t" style="left:351.75px;width:300px;text-align:center;top:391.98px;height:20px;line-height:20px;font-size:9.2px;color:#262626;font-weight:400;">文本框</div>
<div class="a t" style="left:444.30px;width:300px;text-align:center;top:391.98px;height:20px;line-height:20px;font-size:9.2px;color:#262626;font-weight:400;">是</div>
<div class="a t" style="left:537.05px;width:300px;text-align:center;top:391.98px;height:20px;line-height:20px;font-size:9.2px;color:#262626;font-weight:400;">是</div>
<div class="a t" style="left:841.90px;top:391.98px;height:20px;line-height:20px;font-size:9.2px;color:#1677ff;font-weight:400;">修改</div>
<div class="a" style="left:865.40px;top:396.88px;width:0.90px;height:9.00px;background:#f0f0f0"></div>
<div class="a t" style="left:870.90px;top:391.98px;height:20px;line-height:20px;font-size:9.2px;color:#ff4d4f;font-weight:400;">删除</div>
<div class="a" style="left:933.00px;top:79.00px;width:304.00px;height:1.00px;background:#f0f0f0"></div>
<div class="a" style="left:930.00px;top:81.80px;width:1.00px;height:505.40px;background:#f0f0f0"></div>
<div class="a" style="left:1239.00px;top:81.80px;width:1.00px;height:505.40px;background:#f0f0f0"></div>
<div class="a" style="left:933.00px;top:589.00px;width:304.00px;height:1.00px;background:#f0f0f0"></div>
<div class="a" style="left:930.40px;top:113.30px;width:310.00px;height:1.00px;background:#f0f0f0"></div>
<div class="a t" style="left:946.00px;top:86.00px;height:20px;line-height:20px;font-size:10.5px;color:#1f1f1f;font-weight:700;-webkit-text-stroke:0;">固定字段</div>
<svg class="a" style="left:1197.60px;top:119.30px;" width="10.6" height="10" viewBox="0 0 10.6 10"><path d="M5.3 0.3 V6.2 M2.9 3.9 L5.3 6.3 L7.7 3.9 M0.7 4.8 V9.3 H9.9 V4.8" stroke="#1f1f1f" stroke-width="1.1" fill="none"/></svg>
<svg class="a" style="left:1218.20px;top:119.60px;" width="11" height="10" viewBox="0 0 11 10"><path d="M2.6 3 V0.6 H8.4 V3" stroke="#1f1f1f" stroke-width="1" fill="none"/><rect x="0.6" y="3" width="9.8" height="4.6" rx="1" stroke="#1f1f1f" stroke-width="1.1" fill="none"/><rect x="3" y="5.6" width="5" height="3.8" stroke="#1f1f1f" stroke-width="1" fill="#fff"/></svg>
<div class="a" style="left:941.30px;top:138.00px;width:287.90px;height:26.40px;background:#f5f5f5;border-radius:4px 4px 0 0"></div>
<div class="a" style="left:941.30px;top:164.00px;width:287.90px;height:1.00px;background:#f0f0f0"></div>
<div class="a" style="left:1085.00px;top:144.50px;width:1.00px;height:13.40px;background:#f0f0f0"></div>
<div class="a t" style="left:949.60px;top:141.80px;height:20px;line-height:20px;font-size:9.2px;color:#1f1f1f;font-weight:700;-webkit-text-stroke:0;">固定字段</div>
<div class="a t" style="left:1093.70px;top:141.80px;height:20px;line-height:20px;font-size:9.2px;color:#1f1f1f;font-weight:700;-webkit-text-stroke:0;">新固定字段</div>
<div class="a" style="left:941.30px;top:196.00px;width:287.90px;height:1.00px;background:#f0f0f0"></div>
<div class="a t" style="left:949.90px;top:170.94px;height:20px;line-height:20px;font-size:9.2px;color:#262626;font-weight:400;">客户编号</div>
<div class="a t" style="left:1093.70px;top:170.94px;height:20px;line-height:20px;font-size:9.2px;color:#262626;font-weight:400;">客户编号</div>
<div class="a" style="left:941.30px;top:228.32px;width:287.90px;height:1.00px;background:#f0f0f0"></div>
<div class="a t" style="left:949.90px;top:203.26px;height:20px;line-height:20px;font-size:9.2px;color:#262626;font-weight:400;">客户电话</div>
<div class="a t" style="left:1093.70px;top:203.26px;height:20px;line-height:20px;font-size:9.2px;color:#262626;font-weight:400;">客户电话</div>
<div class="a" style="left:941.30px;top:260.64px;width:287.90px;height:1.00px;background:#f0f0f0"></div>
<div class="a t" style="left:949.90px;top:235.58px;height:20px;line-height:20px;font-size:9.2px;color:#262626;font-weight:400;">客户姓名</div>
<div class="a t" style="left:1093.70px;top:235.58px;height:20px;line-height:20px;font-size:9.2px;color:#262626;font-weight:400;">客户姓名</div>
<div class="a" style="left:941.30px;top:292.96px;width:287.90px;height:1.00px;background:#f0f0f0"></div>
<div class="a t" style="left:949.90px;top:267.90px;height:20px;line-height:20px;font-size:9.2px;color:#262626;font-weight:400;">行政区域</div>
<div class="a t" style="left:1093.70px;top:267.90px;height:20px;line-height:20px;font-size:9.2px;color:#262626;font-weight:400;">行政区域</div>
<div class="a" style="left:941.30px;top:325.28px;width:287.90px;height:1.00px;background:#f0f0f0"></div>
<div class="a t" style="left:949.90px;top:300.22px;height:20px;line-height:20px;font-size:9.2px;color:#262626;font-weight:400;">客户地址</div>
<div class="a t" style="left:1093.70px;top:300.22px;height:20px;line-height:20px;font-size:9.2px;color:#262626;font-weight:400;">客户地址</div>
<div class="a" style="left:941.30px;top:357.60px;width:287.90px;height:1.00px;background:#f0f0f0"></div>
<div class="a t" style="left:949.90px;top:332.54px;height:20px;line-height:20px;font-size:9.2px;color:#262626;font-weight:400;">备注</div>
<div class="a t" style="left:1093.70px;top:332.54px;height:20px;line-height:20px;font-size:9.2px;color:#262626;font-weight:400;">备注</div>
<div class="a" style="left:941.30px;top:389.92px;width:287.90px;height:1.00px;background:#f0f0f0"></div>
<div class="a t" style="left:949.90px;top:364.86px;height:20px;line-height:20px;font-size:9.2px;color:#262626;font-weight:400;">添加时间</div>
<div class="a t" style="left:1093.70px;top:364.86px;height:20px;line-height:20px;font-size:9.2px;color:#262626;font-weight:400;">添加时间</div>
<div class="a" style="left:1088.80px;top:166.70px;width:143.00px;height:29.10px;border:2px solid #ff4d5e;border-radius:3px"></div>
</div>
</body>
</html>
